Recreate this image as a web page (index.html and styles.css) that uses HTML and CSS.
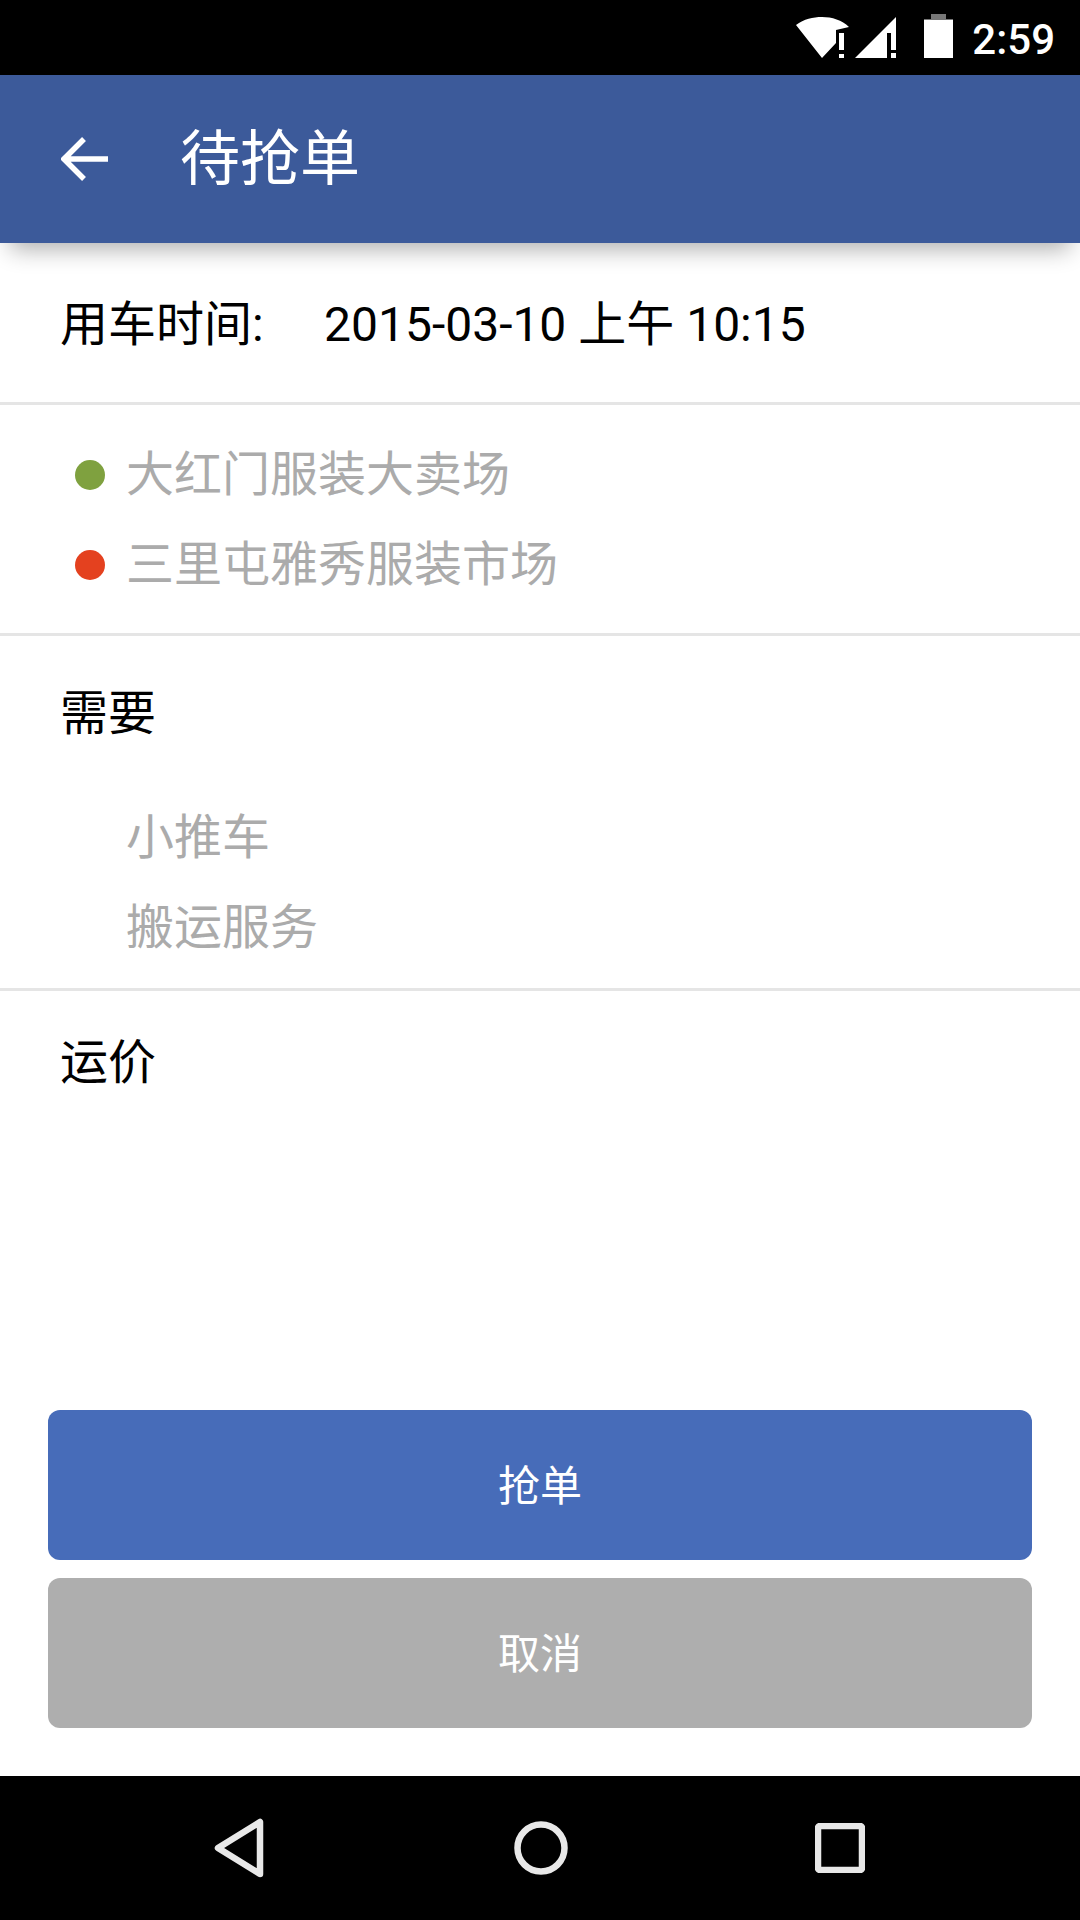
FILE: index.html
```html
<!doctype html>
<html>
<head>
	<title>待抢单</title>
	<meta charset="utf-8">
	<link rel="stylesheet" href="styles.css">
</head>
<body>
	<div class="screen">

		<div class="status_bar">
			<svg class="icon_wifi" width="53" height="41" viewBox="0 0 53 41">
				<path d="M0 8 C8 2 17 0 26 0 C36 0 46 3 53 10 L40 13 V26 L26 41 Z" fill="#fff"/>
				<rect x="43" y="16" width="5" height="17" fill="#fff"/>
				<rect x="43" y="37" width="5" height="4" fill="#fff"/>
			</svg>
			<svg class="icon_signal" width="41" height="41" viewBox="0 0 41 41">
				<path d="M0 41 L41 0 V16 H32 V41 Z" fill="#fff"/>
				<rect x="36" y="16" width="5" height="17" fill="#fff"/>
				<rect x="36" y="36" width="5" height="5" fill="#fff"/>
			</svg>
			<svg class="icon_battery" width="29" height="44" viewBox="0 0 29 44">
				<path d="M7 0 H22 V5 H29 V11 H0 V5 H7 Z" fill="#777"/>
				<rect y="6" width="29" height="38" fill="#fff"/>
			</svg>
			<span class="clock">2:59</span>
		</div>

		<div class="app_bar">
			<svg class="icon_back" width="48" height="48" viewBox="0 0 48 48">
				<path d="M47 24 H4 M23 4 L3 24 L23 44" fill="none" stroke="#fff" stroke-width="5.5"/>
			</svg>
			<span class="title">待抢单</span>
		</div>

		<div class="content">
			<div class="row_time">
				<span class="time_label">用车时间:</span>
				<span>2015-03-10 上午 10:15</span>
			</div>

			<div class="row_route">
				<div class="route_item"><i class="dot dot_start"></i><span class="route_text">大红门服装大卖场</span></div>
				<div class="route_item"><i class="dot dot_end"></i><span class="route_text">三里屯雅秀服装市场</span></div>
			</div>

			<div class="row_needs">
				<div class="row_title">需要</div>
				<div class="need_list">
					<div class="need_item">小推车</div>
					<div class="need_item">搬运服务</div>
				</div>
			</div>

			<div class="row_price">
				<div class="row_title">运价</div>
			</div>
		</div>

		<div class="actions">
			<button class="btn btn_grab">抢单</button>
			<button class="btn btn_cancel">取消</button>
		</div>

		<div class="nav_bar">
			<svg width="54" height="62" viewBox="0 0 54 62">
				<path d="M47 5 V57 L5 31 Z" fill="none" stroke="#e8e8e8" stroke-width="6.5" stroke-linejoin="round"/>
			</svg>
			<svg width="54" height="54" viewBox="0 0 54 54">
				<circle cx="27" cy="27" r="23.5" fill="none" stroke="#e8e8e8" stroke-width="6.5"/>
			</svg>
			<svg width="50" height="50" viewBox="0 0 50 50">
				<rect x="3" y="3" width="44" height="44" rx="2" fill="none" stroke="#e8e8e8" stroke-width="6.5"/>
			</svg>
		</div>

	</div><!-- /screen -->
</body>
</html>
```
FILE: styles.css
```css
body{
	margin: 0;
	padding: 0;
	background: #fff;
	font-family: Roboto, "Noto Sans CJK SC", sans-serif;
}
.screen{
	display: flex;
	flex-direction: column;
	width: 1080px;
	height: 1920px;
	overflow: hidden;
}

/* status bar */
.status_bar{
	display: flex;
	align-items: flex-end;
	justify-content: flex-end;
	height: 58px;
	padding: 0 25px 17px 0;
	background: #000;
	color: #fff;
}
.icon_wifi{
	margin-right: 6px;
}
.icon_signal{
	margin-right: 28px;
}
.icon_battery{
	margin-right: 19px;
}
.clock{
	margin-bottom: -4px;
	font-size: 42px;
	font-weight: 500;
	line-height: 44px;
}

/* app bar */
.app_bar{
	position: relative;
	display: flex;
	align-items: center;
	height: 168px;
	padding-left: 61px;
	background: #3c5a9a;
	box-shadow: 0 16px 22px -10px rgba(0,0,0,.32);
	color: #fff;
}
.icon_back{
	margin-right: 71px;
}
.title{
	margin-bottom: 12px;
	font-size: 60px;
}

/* rows */
.content{
	flex: 1;
}
.row_time{
	display: flex;
	align-items: center;
	height: 153px;
	padding: 0 0 6px 60px;
	border-bottom: 3px solid #e5e5e5;
	font-size: 48px;
	color: #000;
}
.time_label{
	width: 264px;
}
.row_route{
	height: 203px;
	padding-top: 25px;
	border-bottom: 3px solid #e5e5e5;
}
.route_item{
	display: flex;
	align-items: center;
	height: 90px;
	padding-left: 75px;
	font-size: 48px;
	color: #ababab;
}
.route_text{
	margin-bottom: 10px;
}
.dot{
	width: 30px;
	height: 30px;
	margin-right: 21px;
	border-radius: 50%;
}
.dot_start{
	background: #7fa13f;
}
.dot_end{
	background: #e4411f;
}
.row_needs{
	height: 319px;
	padding-top: 33px;
	border-bottom: 3px solid #e5e5e5;
}
.row_title{
	padding-left: 60px;
	font-size: 48px;
	line-height: 90px;
	color: #000;
}
.need_list{
	margin-top: 34px;
}
.need_item{
	padding-left: 126px;
	font-size: 48px;
	line-height: 90px;
	color: #ababab;
}
.row_price{
	padding-top: 27px;
}

/* buttons */
.actions{
	display: flex;
	flex-direction: column;
	gap: 18px;
	padding: 0 48px 48px 48px;
}
.btn{
	height: 150px;
	padding: 0 0 6px 0;
	border: 0;
	border-radius: 12px;
	font-family: inherit;
	font-size: 42px;
	color: #fff;
}
.btn_grab{
	background: #476cb9;
}
.btn_cancel{
	background: #aeaeae;
}

/* nav bar */
.nav_bar{
	display: flex;
	align-items: center;
	justify-content: center;
	gap: 247px;
	height: 144px;
	padding-right: 3px;
	background: #000;
}
```
